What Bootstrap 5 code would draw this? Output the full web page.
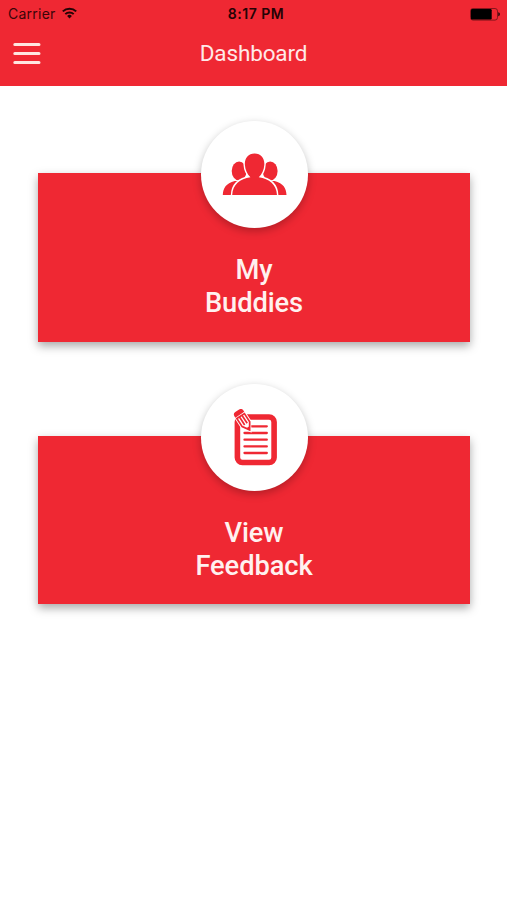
<!DOCTYPE html>
<html lang="en">
<head>
<meta charset="utf-8">
<meta name="viewport" content="width=device-width, initial-scale=1">
<title>Dashboard</title>
<link rel="stylesheet" href="https://cdn.jsdelivr.net/npm/bootstrap@5.3.0/dist/css/bootstrap.min.css">
<style>
  :root { --brand: #ef2833; }
  body { font-family: Roboto, sans-serif; background: #fff; }
  svg { display: block; }
  .app-header { background: var(--brand); height: 86px; }
  .status-bar { height: 28px; padding: 0 7px 0 8px; font: 14px/28px Inter, sans-serif; color: #3a0508; letter-spacing: .25px; }
  .status-bar > * { flex: 1 1 0; }
  .wifi { margin: -3px 0 0 6px; }
  .clock { font-weight: 600; font-size: 14px; color: #240305; letter-spacing: .5px; padding-left: 4px; }
  .title-bar { height: 51px; padding: 0 13px; }
  .title-bar > * { flex: 1 1 0; }
  .page-title { font-size: 22.5px; line-height: 51px; font-weight: 400; color: #ffe9e8; letter-spacing: -.15px; }
  .tiles { padding: 87.4px 37px 0 38px; gap: 94px; }
  .tile { background: var(--brand); height: 168.5px; box-shadow: 0 4px 9px rgba(0,0,0,.34); color: #fff1ef; }
  .tile-badge { width: 107px; height: 107px; margin-top: -52.1px; background: #fff; box-shadow: 0 3px 9px rgba(0,0,0,.26); }
  .tile-label { margin-top: 26.2px; font-size: 27.3px; line-height: 33px; font-weight: 500; letter-spacing: -.1px; }
</style>
</head>
<body class="min-vh-100">
<header class="app-header">
  <div class="status-bar d-flex align-items-center">
    <div class="d-flex align-items-center">
      <span>Carrier</span>
      <svg class="wifi" width="15" height="12" viewBox="0 0 15 12" fill="none" stroke="#240305" stroke-width="2">
        <path d="M.8 4.4a9.6 9.6 0 0 1 13.4 0M3.3 7.1a6 6 0 0 1 8.4 0"/>
        <path d="M7.5 11.4 5.1 8.9a3.5 3.5 0 0 1 4.8 0z" fill="#240305" stroke="none"/>
      </svg>
    </div>
    <div class="clock text-center">8:17 PM</div>
    <div class="d-flex justify-content-end">
      <svg width="30" height="13" viewBox="0 0 30 13">
        <rect x=".5" y=".5" width="27" height="11.6" rx="2.5" fill="none" stroke="#6d1016" stroke-width=".8"/>
        <rect x="1" y="1" width="20.7" height="10.5" rx="1.2"/>
        <path d="M28.4 4.3c1.8.5 1.8 3.3 0 3.9z"/>
      </svg>
    </div>
  </div>
  <div class="title-bar d-flex align-items-center">
    <div>
      <button class="btn p-0 border-0 d-block" aria-label="Menu">
        <svg width="28" height="23" viewBox="0 0 28 23" stroke="#ffe6e1" stroke-width="3" stroke-linecap="round">
          <path d="M1.8 2.5h24.2M1.8 11.5h24.2M1.8 20.5h24.2"/>
        </svg>
      </button>
    </div>
    <h1 class="page-title text-center mb-0">Dashboard</h1>
    <div></div>
  </div>
</header>

<main class="tiles d-flex flex-column pb-4">
  <section class="tile d-flex flex-column align-items-center">
    <div class="tile-badge rounded-circle flex-shrink-0 d-flex align-items-center justify-content-center">
      <svg width="66" height="43" viewBox="-1.8 0 66 43" fill="#ef2833">
        <ellipse cx="16.3" cy="18" rx="7.4" ry="9.5"/>
        <ellipse cx="47.4" cy="18" rx="7.4" ry="9.5"/>
        <path d="M0 42c.3-7 3-11.500 12-14h7v14zM63.700 42c-.3-7-3-11.500-12-14h-7v14z"/>
        <path d="M31.800 .4c-6.600 0-10.200 5-9.700 11.600.3 5 2.300 9.200 5.500 12.200-10.500 1.600-17.700 7.400-18.200 17.800h44.800c-.5-10.400-7.700-16.200-18.200-17.800 3.200-3 5.200-7.200 5.500-12.200.5-6.600-3.100-11.600-9.700-11.600z" stroke="#fff" stroke-width="2.8" paint-order="stroke"/>
        <path d="M7 42h50v2H7z" fill="#fff"/>
      </svg>
    </div>
    <div class="tile-label text-center">My<br>Buddies</div>
  </section>

  <section class="tile d-flex flex-column align-items-center">
    <div class="tile-badge rounded-circle flex-shrink-0 d-flex align-items-center justify-content-center">
      <svg class="ms-1" width="46" height="57" viewBox="-.5 0 46 57" fill="none" stroke="#ef2833">
        <rect x="3.9" y="8" width="36.7" height="45.5" rx="5" stroke-width="5.6"/>
        <path d="M18 17.300h15.300M11 24h22.300M11 30.700h22.300M11 37.400h22.300M11 44h22.300" stroke-width="2.3" stroke-linecap="round"/>
        <g transform="translate(5.5 4.5) rotate(-33)">
          <path d="M-5-1q0-2 3-2h4q3 0 3 2v13L0 20.500-5 12z" fill="#fff" stroke="#fff" stroke-width="2.6"/>
          <path d="M-5.300 1.500V0q0-3.300 3-3.300h4.600q3 0 3 3.300v1.500z" fill="#ef2833" stroke="none"/>
          <path d="M-4.500 3v9.700L0 19.500l4.500-6.800V3zM-1.500 3v9.700M1.500 3v9.700" stroke-width="1.7"/>
          <path d="M-1.800 16.300 0 20l1.800-3.700z" fill="#ef2833" stroke="none"/>
        </g>
      </svg>
    </div>
    <div class="tile-label text-center">View<br>Feedback</div>
  </section>
</main>
<script src="https://cdn.jsdelivr.net/npm/bootstrap@5.3.0/dist/js/bootstrap.bundle.min.js"></script>
</body>
</html>
